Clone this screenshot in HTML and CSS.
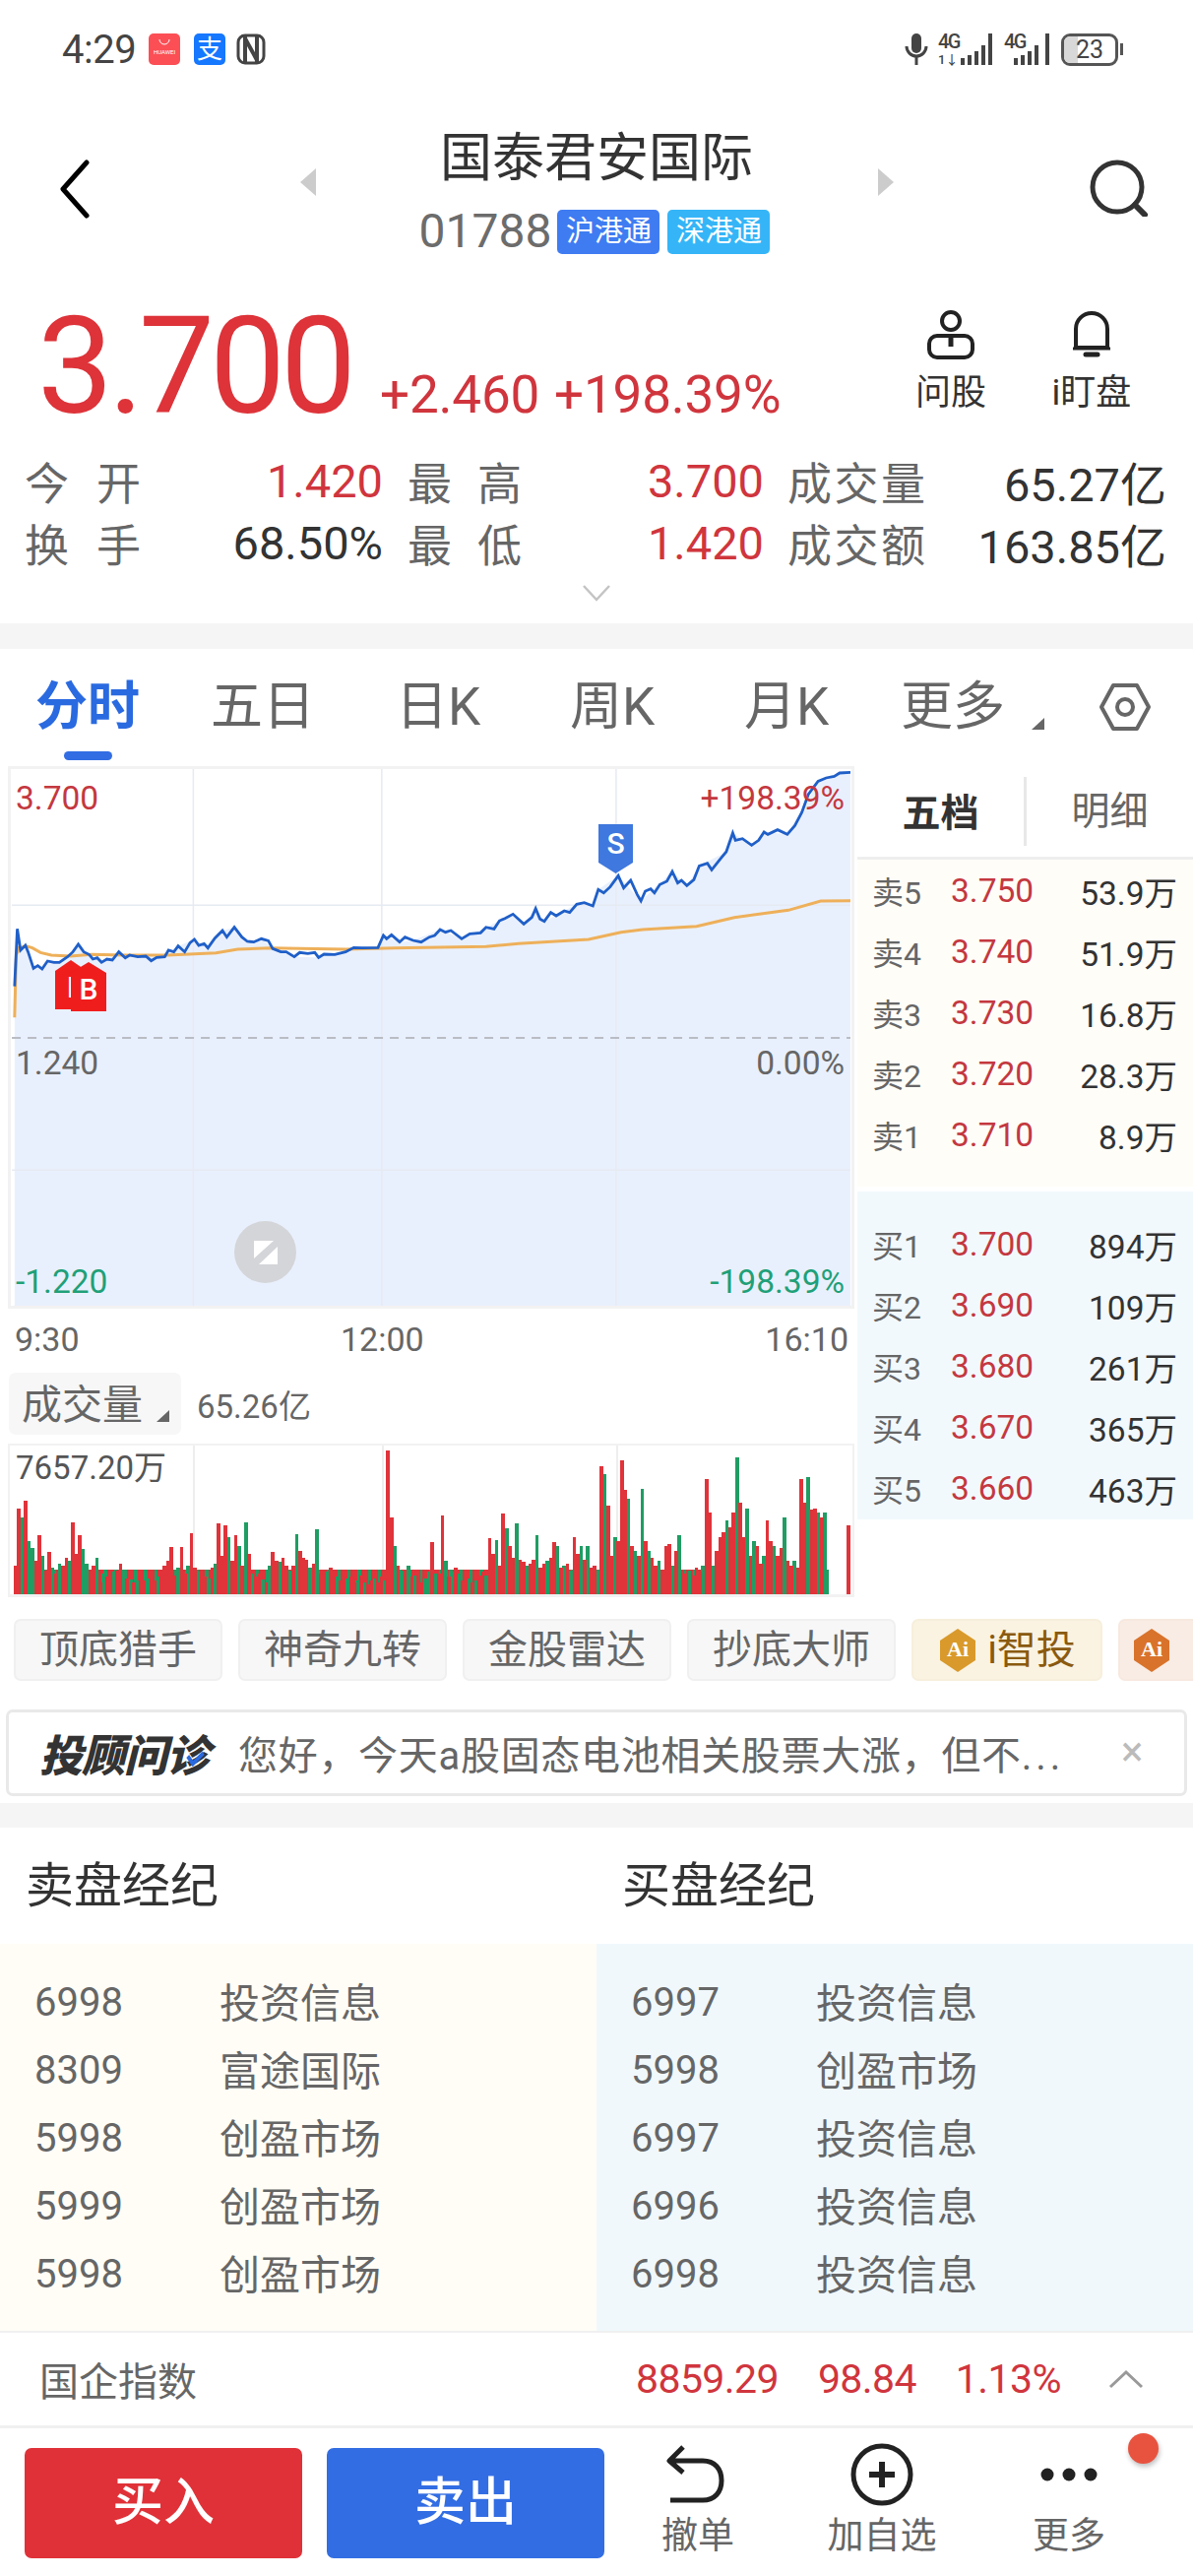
FILE: index.html
```html
<!DOCTYPE html>
<html>
    <head>
        <meta charset="utf-8">
        <title>国泰君安国际</title>
        <link rel="stylesheet" href="styles.css">
    </head>
    <body>
        <div class="page">
            <div class="status">
                <span class="clock">4:29</span>
                <span class="app-huawei">
                    <svg width="32" height="32" viewBox="0 0 32 32"><rect width="32" height="32" rx="5" fill="#fb4f55"/><path d="M11 6a5 5 0 0 0 10 0" fill="none" stroke="#fff" stroke-width="1"/><text x="16" y="21" class="huawei-text">HUAWEI</text></svg>
                </span>
                <span class="app-ali">支</span>
                <svg class="app-nfc" width="30" height="32" viewBox="0 0 30 32"><rect x="2" y="2" width="26" height="28" rx="7" fill="none" stroke="#444" stroke-width="3"/><path d="M9 3v26M21 3v26M9 5l12 22" fill="none" stroke="#444" stroke-width="4"/></svg>
                <span class="status-gap"></span>
                <svg width="24" height="32" viewBox="0 0 24 32"><rect x="7" y="0" width="10" height="20" rx="5" fill="#444"/><path d="M2 13a10 10 0 0 0 20 0M12 24v8" fill="none" stroke="#444" stroke-width="3"/></svg>
                <svg class="signal" width="57" height="33" viewBox="0 0 57 33"><text x="0" y="15" class="sig-text">4G</text><text x="0" y="31" class="sig-small">1↓</text><path d="M25 32v-7M32 32v-10M39 32v-14M46 32v-20M53 32v-32" stroke="#444" stroke-width="4" fill="none"/></svg>
                <svg class="signal" width="48" height="33" viewBox="0 0 48 33"><text x="0" y="15" class="sig-text">4G</text><path d="M12 32v-7M19 32v-10M26 32v-14M33 32v-20M44 32v-32" stroke="#444" stroke-width="4" fill="none"/></svg>
                <span class="battery"><span class="battery-fill"></span><span class="battery-num">23</span></span>
                <span class="battery-nub"></span>
            </div>

            <div class="head">
                <svg class="back" width="33" height="60" viewBox="0 0 33 60"><path d="M29 3L5 30l24 27" fill="none" stroke="#000" stroke-width="5" stroke-linecap="round" stroke-linejoin="round"/></svg>
                <span class="tri-left"></span>
                <div class="head-mid">
                    <div class="head-name">国泰君安国际</div>
                    <div class="head-code">
                        <span class="code-num">01788</span>
                        <span class="tag tag-hu">沪港通</span>
                        <span class="tag tag-sz">深港通</span>
                    </div>
                </div>
                <span class="tri-right"></span>
                <svg class="search" width="64" height="58" viewBox="0 0 64 58"><circle cx="30" cy="28" r="25" fill="none" stroke="#333" stroke-width="5"/><path d="M48 46l10 10" stroke="#333" stroke-width="6" stroke-linecap="round"/></svg>
            </div>

            <div class="quote">
                <div class="price-row">
                    <span class="price">3.700</span>
                    <span class="change">+2.460</span>
                    <span class="change">+198.39%</span>
                    <div class="quote-tools">
                        <div class="tool">
                            <svg width="52" height="50" viewBox="0 0 52 50"><circle cx="26" cy="11" r="9" fill="none" stroke="#222" stroke-width="4"/><rect x="4" y="26" width="44" height="22" rx="8" fill="none" stroke="#222" stroke-width="4"/><path d="M26 27v10" stroke="#222" stroke-width="5"/></svg>
                            <span>问股</span>
                        </div>
                        <div class="tool">
                            <svg width="44" height="50" viewBox="0 0 44 50"><path d="M6 38V19a16 16 0 0 1 32 0v19z" fill="none" stroke="#222" stroke-width="4" stroke-linejoin="round"/><path d="M3 39h38" stroke="#222" stroke-width="3"/><path d="M16 45h12" stroke="#222" stroke-width="5" stroke-linecap="round"/></svg>
                            <span>i盯盘</span>
                        </div>
                    </div>
                </div>
                <div class="stats">
                    <span class="stat-label">今 开</span><span class="stat-val red">1.420</span>
                    <span class="stat-label stat-two">最 高</span><span class="stat-val red">3.700</span>
                    <span class="stat-label stat-three">成交量</span><span class="stat-val">65.27亿</span>
                    <span class="stat-label">换 手</span><span class="stat-val">68.50%</span>
                    <span class="stat-label stat-two">最 低</span><span class="stat-val red">1.420</span>
                    <span class="stat-label stat-three">成交额</span><span class="stat-val">163.85亿</span>
                </div>
                <svg class="more-chevron" width="30" height="18" viewBox="0 0 30 18"><path d="M2 2l13 14L28 2" fill="none" stroke="#c4c4c4" stroke-width="2.5"/></svg>
            </div>

            <div class="band"></div>

            <div class="tabs">
                <span class="tab tab-on">分时</span>
                <span class="tab">五日</span>
                <span class="tab">日K</span>
                <span class="tab">周K</span>
                <span class="tab">月K</span>
                <span class="tab">更多<i class="corner corner-tab"></i></span>
                <svg class="tab-gear" width="54" height="50" viewBox="0 0 54 50"><path d="M15 3h24l12 22-12 22H15L3 25z" fill="none" stroke="#666" stroke-width="4" stroke-linejoin="round"/><circle cx="27" cy="25" r="8" fill="none" stroke="#666" stroke-width="4"/></svg>
                <span class="tab-bar"></span>
            </div>

            <div class="market">
                <div class="market-left">
                    <div class="price-chart">
                        <svg class="chart-lines" viewBox="0 0 1575 1677" preserveAspectRatio="none">
                            <polygon fill="#e9f0fd" points="27,695 32,520 38,585 47,570 52,590 62,640 70,632 78,642 88,618 110,622 125,605 145,567 165,598 188,622 220,590 240,600 270,603 305,605 330,572 360,552 385,578 412,525 434,515 458,558 484,550 505,580 545,605 590,607 640,590 655,577 700,577 710,540 740,560 765,555 815,522 855,550 900,515 950,475 970,505 992,458 1008,497 1068,445 1098,450 1108,400 1145,358 1187,435 1245,345 1272,388 1295,328 1345,285 1357,228 1392,265 1415,225 1458,232 1485,165 1515,70 1555,45 1575,43 1575,1677 27,1677"/>
                            <path class="grid" d="M22 448H1575M22 1255H1575M358 28V1677M707 28V1677M1141 28V1677"/>
                            <path class="grid-mid" d="M22 852H1575"/>
                            <polyline class="line-avg" points="27,790 30,600 35,577 50,573 60,578 75,592 95,600 130,603 170,598 230,600 310,600 400,593 440,582 500,578 640,582 730,578 900,574 960,565 1090,552 1150,530 1190,522 1290,512 1360,485 1460,463 1520,435 1575,434"/>
                            <polyline class="line-price" points="27,695 32,520 38,585 47,570 52,590 62,640 70,632 78,642 88,618 100,622 110,622 125,605 135,590 145,567 155,590 165,598 172,612 180,608 188,622 198,612 208,615 220,590 232,608 240,600 255,605 270,603 280,617 290,607 305,605 312,585 322,590 330,572 342,590 352,562 360,552 368,570 378,565 385,578 398,548 412,525 420,545 434,515 448,545 458,558 470,560 484,550 497,556 505,580 520,590 530,590 545,605 555,592 570,595 583,592 590,607 600,597 620,598 640,590 655,577 670,578 700,577 710,540 716,550 725,538 740,560 750,545 765,555 780,560 795,545 805,540 815,522 825,530 835,525 855,550 870,535 890,532 900,515 915,520 925,495 935,488 950,475 970,505 985,485 992,458 1000,490 1008,497 1020,470 1030,480 1045,465 1055,470 1068,445 1082,440 1098,450 1108,400 1118,410 1130,392 1145,358 1155,395 1168,372 1180,415 1187,435 1195,405 1205,398 1212,410 1222,385 1235,375 1245,345 1255,380 1262,372 1272,388 1285,370 1295,328 1310,320 1318,340 1335,305 1345,285 1357,228 1362,250 1375,245 1392,265 1405,250 1415,225 1422,232 1440,218 1458,232 1472,205 1485,165 1497,110 1515,70 1530,60 1545,55 1555,45 1575,43"/>
                        </svg>
                        <span class="axis axis-tl red-dim">3.700</span>
                        <span class="axis axis-tr red-dim">+198.39%</span>
                        <span class="axis axis-ml">1.240</span>
                        <span class="axis axis-mr">0.00%</span>
                        <span class="axis axis-bl green">-1.220</span>
                        <span class="axis axis-br green">-198.39%</span>
                        <span class="mark mark-i">I</span>
                        <span class="mark mark-b">B</span>
                        <span class="mark mark-s">S</span>
                        <span class="stamp">
                            <svg width="30" height="30" viewBox="0 0 30 30"><path d="M3 3h20L3 21zM27 9v18H8z" fill="#fff"/></svg>
                        </span>
                    </div>
                    <div class="times"><span class="time-start">9:30</span><span>12:00</span><span class="time-end">16:10</span></div>
                    <div class="vol-head">
                        <span class="vol-btn">成交量<i class="corner"></i></span>
                        <span class="vol-total">65.26亿</span>
                    </div>
                    <div class="vol-chart">
                        <i class="vol-grid vol-grid-1"></i>
                        <i class="vol-grid vol-grid-2"></i>
                        <i class="vol-grid vol-grid-3"></i>
                        <svg class="vol-bars" viewBox="-0.5 0 247 156" preserveAspectRatio="none">
                            <path class="vol-base" stroke="#1f9d63" d="M0 143H240"/>
                            <path class="vol-base vol-base-red" stroke="#e0333a" d="M0 143H240"/>
                            <path stroke="#1f9d63" d="M2 156v-80M4 156v-55M5 156v-48M8 156v-40M11 156v-28M13 156v-32M16 156v-35M20 156v-47M21 156v-32M24 156v-38M26 156v-22M29 156v-24M32 156v-26M34 156v-15M36 156v-14M39 156v-16M42 156v-18M48 156v-28M51 156v-30M54 156v-24M57 156v-16M59 156v-32M63 156v-60M66 156v-50M68 156v-75M70 156v-22M73 156v-15M75 156v-30M78 156v-34M81 156v-25M83 156v-63M87 156v-28M89 156v-68M92 156v-24M95 156v-18M98 156v-16M101 156v-14M103 156v-12M106 156v-16M109 156v-14M112 156v-50M114 156v-25M116 156v-30M118 156v-20M121 156v-16M122 156v-24M124 156v-22M127 156v-35M129 156v-24M131 156v-22M134 156v-16M136 156v-14M139 156v-20M142 156v-56M145 156v-69M148 156v-74M151 156v-30M154 156v-62M157 156v-35M160 156v-50M162 156v-30M164 156v-25M167 156v-50M169 156v-50M172 156v-26M174 156v-125M177 156v-60M181 156v-100M183 156v-45M185 156v-110M187 156v-45M190 156v-35M194 156v-30M196 156v-62M199 156v-25M203 156v-30M206 156v-30M210 156v-77M213 156v-143M216 156v-89M218 156v-55M221 156v-40M224 156v-50M227 156v-80M230 156v-35M234 156v-122M237 156v-85M239 156v-85"/>
                            <path stroke="#e0333a" d="M0 156v-30M1 156v-89M3 156v-97M6 156v-35M7 156v-62M9 156v-25M10 156v-44M12 156v-22M14 156v-30M15 156v-38M17 156v-75M18 156v-42M19 156v-62M22 156v-18M23 156v-30M25 156v-12M27 156v-18M28 156v-20M30 156v-25M31 156v-32M33 156v-16M35 156v-12M37 156v-18M38 156v-14M40 156v-20M41 156v-14M43 156v-12M44 156v-30M45 156v-35M46 156v-49M47 156v-20M49 156v-49M50 156v-22M52 156v-64M53 156v-28M55 156v-20M56 156v-18M58 156v-28M60 156v-74M61 156v-40M62 156v-72M64 156v-35M65 156v-62M67 156v-30M69 156v-42M71 156v-18M72 156v-22M74 156v-12M76 156v-44M77 156v-35M79 156v-38M80 156v-30M82 156v-30M84 156v-45M85 156v-38M86 156v-36M88 156v-32M90 156v-22M91 156v-15M93 156v-28M94 156v-20M96 156v-14M97 156v-22M99 156v-18M100 156v-12M102 156v-20M104 156v-10M105 156v-14M107 156v-12M108 156v-18M110 156v-150M111 156v-80M113 156v-30M115 156v-22M117 156v-18M119 156v-26M120 156v-12M123 156v-54M125 156v-22M126 156v-82M128 156v-18M130 156v-28M132 156v-14M133 156v-20M135 156v-12M137 156v-20M138 156v-24M140 156v-59M141 156v-42M143 156v-30M144 156v-84M146 156v-50M147 156v-38M149 156v-36M150 156v-34M152 156v-32M153 156v-36M155 156v-28M156 156v-32M158 156v-38M159 156v-54M161 156v-28M163 156v-32M165 156v-60M166 156v-42M168 156v-36M170 156v-28M171 156v-30M173 156v-133M175 156v-92M176 156v-40M178 156v-55M179 156v-140M180 156v-109M182 156v-50M184 156v-40M186 156v-55M188 156v-38M189 156v-30M191 156v-26M192 156v-50M193 156v-52M195 156v-45M197 156v-25M198 156v-22M200 156v-20M201 156v-28M202 156v-24M204 156v-120M205 156v-85M207 156v-45M208 156v-60M209 156v-65M211 156v-70M212 156v-85M214 156v-95M215 156v-60M217 156v-40M219 156v-50M220 156v-32M222 156v-77M223 156v-55M225 156v-40M226 156v-48M228 156v-35M229 156v-30M231 156v-28M232 156v-120M233 156v-95M235 156v-88M236 156v-89M238 156v-80M246 156v-72"/>
                        </svg>
                        <span class="vol-max">7657.20万</span>
                    </div>
                </div>

                <div class="book">
                    <div class="book-tabs">
                        <span class="book-tab book-tab-on">五档</span>
                        <span class="book-tab">明细</span>
                    </div>
                    <div class="book-side book-sell">
                        <div class="book-row"><span class="book-lab">卖5</span><span class="book-px">3.750</span><span class="book-vol">53.9万</span></div>
                        <div class="book-row"><span class="book-lab">卖4</span><span class="book-px">3.740</span><span class="book-vol">51.9万</span></div>
                        <div class="book-row"><span class="book-lab">卖3</span><span class="book-px">3.730</span><span class="book-vol">16.8万</span></div>
                        <div class="book-row"><span class="book-lab">卖2</span><span class="book-px">3.720</span><span class="book-vol">28.3万</span></div>
                        <div class="book-row"><span class="book-lab">卖1</span><span class="book-px">3.710</span><span class="book-vol">8.9万</span></div>
                    </div>
                    <div class="book-side book-buy">
                        <div class="book-row"><span class="book-lab">买1</span><span class="book-px">3.700</span><span class="book-vol">894万</span></div>
                        <div class="book-row"><span class="book-lab">买2</span><span class="book-px">3.690</span><span class="book-vol">109万</span></div>
                        <div class="book-row"><span class="book-lab">买3</span><span class="book-px">3.680</span><span class="book-vol">261万</span></div>
                        <div class="book-row"><span class="book-lab">买4</span><span class="book-px">3.670</span><span class="book-vol">365万</span></div>
                        <div class="book-row"><span class="book-lab">买5</span><span class="book-px">3.660</span><span class="book-vol">463万</span></div>
                    </div>
                </div>
            </div>

            <div class="chips">
                <span class="chip">顶底猎手</span>
                <span class="chip">神奇九转</span>
                <span class="chip">金股雷达</span>
                <span class="chip">抄底大师</span>
                <span class="chip chip-gold">
                    <svg width="40" height="44" viewBox="0 0 40 44"><polygon points="20,0 38,12 38,32 20,44 2,32 2,12" fill="#d99a2b"/><text x="20" y="28" class="ai-text">Ai</text></svg>
                    i智投
                </span>
                <span class="chip chip-copper">
                    <svg width="40" height="44" viewBox="0 0 40 44"><polygon points="20,0 38,12 38,32 20,44 2,32 2,12" fill="#d9732b"/><text x="20" y="28" class="ai-text">Ai</text></svg>
                </span>
            </div>

            <div class="advisor">
                <span class="advisor-logo">投顾问诊<i class="advisor-tick"></i></span>
                <span class="advisor-text">您好，今天a股固态电池相关股票大涨，但不<span class="advisor-dots">...</span></span>
                <span class="advisor-close">×</span>
            </div>

            <div class="band band-two"></div>

            <div class="brokers">
                <div class="broker-col">
                    <div class="broker-title">卖盘经纪</div>
                    <div class="broker-list broker-sell">
                        <div class="broker-row"><span>6998</span><span>投资信息</span></div>
                        <div class="broker-row"><span>8309</span><span>富途国际</span></div>
                        <div class="broker-row"><span>5998</span><span>创盈市场</span></div>
                        <div class="broker-row"><span>5999</span><span>创盈市场</span></div>
                        <div class="broker-row"><span>5998</span><span>创盈市场</span></div>
                    </div>
                </div>
                <div class="broker-col">
                    <div class="broker-title">买盘经纪</div>
                    <div class="broker-list broker-buy">
                        <div class="broker-row"><span>6997</span><span>投资信息</span></div>
                        <div class="broker-row"><span>5998</span><span>创盈市场</span></div>
                        <div class="broker-row"><span>6997</span><span>投资信息</span></div>
                        <div class="broker-row"><span>6996</span><span>投资信息</span></div>
                        <div class="broker-row"><span>6998</span><span>投资信息</span></div>
                    </div>
                </div>
            </div>

            <div class="index-bar">
                <span class="index-name">国企指数</span>
                <span class="index-num index-a">8859.29</span>
                <span class="index-num index-b">98.84</span>
                <span class="index-num index-c">1.13%</span>
                <svg class="index-up" width="36" height="20" viewBox="0 0 36 20"><path d="M2 18L18 3l16 15" fill="none" stroke="#999" stroke-width="3"/></svg>
            </div>

            <div class="foot">
                <span class="trade trade-buy">买入</span>
                <span class="trade trade-sell">卖出</span>
                <div class="foot-tool foot-undo">
                    <svg width="64" height="60" viewBox="0 0 64 60"><path d="M17 2L3 16l14 12M5 16h32c12 0 19 8 19 20s-7 20-19 20H4" fill="none" stroke="#222" stroke-width="5" stroke-linejoin="round"/></svg>
                    <span>撤单</span>
                </div>
                <div class="foot-tool foot-add">
                    <svg width="64" height="64" viewBox="0 0 64 64"><circle cx="32" cy="32" r="29" fill="none" stroke="#222" stroke-width="5"/><path d="M32 19v26M19 32h26" stroke="#222" stroke-width="6"/></svg>
                    <span>加自选</span>
                </div>
                <div class="foot-tool foot-more">
                    <svg width="64" height="60" viewBox="0 0 64 60"><circle cx="10" cy="30" r="6.5" fill="#222"/><circle cx="32" cy="30" r="6.5" fill="#222"/><circle cx="54" cy="30" r="6.5" fill="#222"/></svg>
                    <span>更多</span>
                </div>
                <span class="foot-dot"></span>
            </div>
        </div>
    </body>
</html>
```

FILE: styles.css
```css
body {
    margin: 0;
    background: #fff;
    font-family: Roboto, "Noto Sans CJK SC", sans-serif;
    color: #333;
}
i {
    font-style: normal;
}
.page {
    width: 1212px;
    height: 2616px;
    overflow: hidden;
}
.red {
    color: #d0353d;
}
.red-dim {
    color: #c4383f;
}
.green {
    color: #1fa078;
}

/* status bar */
.status {
    height: 100px;
    padding: 0 71px 0 63px;
    box-sizing: border-box;
    display: flex;
    align-items: center;
    color: #444;
}
.clock {
    font-size: 40px;
    letter-spacing: -.5px;
    width: 88px;
}
.app-huawei {
    width: 32px;
    height: 32px;
    margin-right: 14px;
}
.huawei-text {
    font-size: 6px;
    text-anchor: middle;
    fill: #fff;
}
.app-ali {
    width: 32px;
    height: 32px;
    border-radius: 5px;
    background: #1677ff;
    color: #fff;
    font-size: 26px;
    line-height: 32px;
    text-align: center;
    margin-right: 11px;
}
.status-gap {
    flex: 1;
}
.signal {
    margin-left: 10px;
    overflow: visible;
}
.sig-text {
    font-size: 20px;
    letter-spacing: -1.5px;
    font-weight: 500;
    fill: #444;
}
.sig-small {
    font-size: 13px;
    font-weight: 500;
    fill: #444;
}
.battery {
    margin-left: 10px;
    width: 58px;
    height: 33px;
    box-sizing: border-box;
    border: 3px solid #555;
    border-radius: 9px;
    position: relative;
    overflow: hidden;
    display: block;
}
.battery-fill {
    position: absolute;
    left: 0;
    top: 0;
    bottom: 0;
    width: 14px;
    background: #d8d8d8;
}
.battery-num {
    position: relative;
    display: block;
    text-align: center;
    font-size: 25px;
    line-height: 27px;
}
.battery-nub {
    width: 3px;
    height: 12px;
    margin-left: 2px;
    background: #555;
}

/* title */
.head {
    height: 196px;
    position: relative;
    display: flex;
    justify-content: center;
}
.head-mid {
    padding-top: 31px;
    text-align: center;
}
.head-name {
    font-size: 53px;
    line-height: 60px;
    color: #333;
}
.head-code {
    margin-top: 20px;
    display: flex;
    align-items: center;
    justify-content: center;
}
.code-num {
    font-size: 48px;
    line-height: 48px;
    color: #6c6c6c;
    margin-right: 6px;
    margin-left: 4px;
}
.tag {
    width: 104px;
    height: 45px;
    border-radius: 5px;
    color: #fff;
    font-size: 29px;
    line-height: 45px;
    text-align: center;
    margin-right: 8px;
}
.tag-hu {
    background: #3f7cf2;
}
.tag-sz {
    background: #35b5f7;
}
.back {
    position: absolute;
    left: 59px;
    top: 62px;
}
.search {
    position: absolute;
    left: 1105px;
    top: 62px;
}
.tri-left,
.tri-right {
    position: absolute;
    top: 71px;
    width: 0;
    height: 0;
    border-top: 14px solid transparent;
    border-bottom: 14px solid transparent;
}
.tri-left {
    left: 305px;
    border-right: 16px solid #ccc;
}
.tri-right {
    left: 892px;
    border-left: 16px solid #ccc;
}

/* quote */
.quote {
    height: 337px;
    position: relative;
}
.price-row {
    height: 155px;
    box-sizing: border-box;
    padding: 8px 53px 0 38px;
    display: flex;
    align-items: baseline;
}
.price {
    font-size: 137px;
    line-height: 137px;
    letter-spacing: -5px;
    color: #dd3339;
    margin-right: 29px;
}
.change {
    font-size: 53px;
    letter-spacing: -.2px;
    color: #d0353d;
    margin-right: 15px;
}
.quote-tools {
    margin-left: auto;
    align-self: flex-start;
    display: flex;
    gap: 43px;
    margin-top: 11px;
}
.tool {
    width: 100px;
    display: flex;
    flex-direction: column;
    align-items: center;
    font-size: 36px;
    line-height: 50px;
    color: #333;
}
.tool svg {
    margin-bottom: 9px;
}
.stats {
    padding-left: 25px;
    margin-top: 6px;
    display: grid;
    grid-template-columns: 118px 246px 141px 246px 164px 245px;
    grid-auto-rows: 63px;
    align-items: center;
    font-size: 47px;
}
.stat-label {
    color: #666;
    font-size: 45px;
    text-align-last: justify;
}
.stat-two {
    padding-left: 25px;
}
.stat-three {
    padding-left: 24px;
}
.stat-val {
    text-align: right;
}
.more-chevron {
    position: absolute;
    left: 591px;
    top: 297px;
}
.band {
    height: 26px;
    background: #f5f5f5;
}

/* tabs */
.tabs {
    height: 116px;
    box-sizing: border-box;
    padding: 26px 0 0 36px;
    position: relative;
    display: grid;
    grid-template-columns: 178px 188px 177px 177px 159px 201px 54px;
    align-items: start;
    font-size: 53px;
    line-height: 66px;
    color: #666;
}
.tab-gear {
    margin-top: 8px;
}
.tab {
    position: relative;
}
.tab-on {
    color: #2a6ae0;
    font-weight: 700;
}
.tab-bar {
    position: absolute;
    left: 65px;
    top: 104px;
    width: 49px;
    height: 9px;
    border-radius: 5px;
    background: #326de3;
}
.corner {
    position: absolute;
    width: 0;
    height: 0;
    border-left: 13px solid transparent;
    border-bottom: 12px solid #666;
}
.corner-tab {
    left: 133px;
    top: 44px;
}

/* charts */
.market {
    height: 856px;
    padding-top: 3px;
    box-sizing: border-box;
    display: flex;
}
.market-left {
    width: 860px;
    margin-left: 8px;
}
.price-chart {
    height: 551px;
    box-sizing: border-box;
    border: 3px solid #f2f2f2;
    position: relative;
    overflow: hidden;
}
.chart-lines {
    position: absolute;
    left: -11px;
    top: -11px;
    width: 864px;
    height: 559px;
}
.grid {
    fill: none;
    stroke: #e6eaf2;
    stroke-width: 1.5;
    vector-effect: non-scaling-stroke;
}
.grid-mid {
    fill: none;
    stroke: #b9bcc4;
    stroke-width: 2;
    stroke-dasharray: 9 7;
    vector-effect: non-scaling-stroke;
}
.line-price {
    fill: none;
    stroke: #1f5fc8;
    stroke-width: 2.8;
    vector-effect: non-scaling-stroke;
}
.line-avg {
    fill: none;
    stroke: #eeb05a;
    stroke-width: 3;
    vector-effect: non-scaling-stroke;
}
.axis {
    position: absolute;
    font-size: 33.5px;
    line-height: 40px;
}
.axis-ml,
.axis-mr {
    color: #666;
}
.axis-tl {
    left: 5px;
    top: 10px;
}
.axis-tr {
    right: 7px;
    top: 10px;
}
.axis-ml {
    left: 5px;
    top: 279px;
}
.axis-mr {
    right: 7px;
    top: 279px;
}
.axis-bl {
    left: 5px;
    top: 501px;
}
.axis-br {
    right: 7px;
    top: 501px;
}
.mark {
    position: absolute;
    height: 50px;
    color: #fff;
    font-size: 30px;
    font-weight: 500;
    line-height: 56px;
    text-align: center;
}
.mark-i {
    left: 45px;
    top: 194px;
    width: 32px;
    background: #f01d1d;
    clip-path: polygon(50% 0, 100% 22%, 100% 100%, 0 100%, 0 22%);
}
.mark-b {
    left: 61px;
    top: 196px;
    width: 36px;
    background: #f01d1d;
    clip-path: polygon(50% 0, 100% 22%, 100% 100%, 0 100%, 0 22%);
}
.mark-s {
    left: 597px;
    top: 56px;
    width: 35px;
    background: #3f78de;
    line-height: 40px;
    clip-path: polygon(0 0, 100% 0, 100% 78%, 50% 100%, 0 78%);
}
.stamp {
    position: absolute;
    left: 227px;
    top: 459px;
    width: 63px;
    height: 63px;
    border-radius: 50%;
    background: #d4d5d9;
    display: flex;
    align-items: center;
    justify-content: center;
}
.times {
    height: 61px;
    margin-bottom: 4px;
    padding: 0 6px 0 7px;
    display: flex;
    align-items: center;
    font-size: 34px;
    color: #666;
    box-sizing: border-box;
}
.time-start {
    width: 331px;
}
.time-end {
    margin-left: auto;
}
.vol-head {
    display: flex;
    align-items: center;
    height: 63px;
}
.vol-btn {
    width: 175px;
    height: 63px;
    margin-left: 1px;
    box-sizing: border-box;
    padding-left: 13px;
    border-radius: 7px;
    background: #f7f7f7;
    font-size: 41px;
    line-height: 66px;
    color: #666;
    position: relative;
}
.vol-btn .corner {
    left: 150px;
    top: 38px;
}
.vol-total {
    margin-left: 16px;
    font-size: 33px;
    color: #666;
}
.vol-chart {
    margin-top: 9px;
    height: 156px;
    border: 2px solid #f2f2f2;
    border-bottom-width: 3px;
    box-sizing: border-box;
    position: relative;
}
.vol-grid {
    position: absolute;
    top: 0;
    bottom: 0;
    width: 2px;
    background: #eee;
}
.vol-grid-1 {
    left: 186px;
}
.vol-grid-2 {
    left: 378px;
}
.vol-grid-3 {
    left: 616px;
}
.vol-bars {
    position: absolute;
    left: 4px;
    bottom: 0;
    width: 850px;
    height: 152px;
    fill: none;
    stroke-width: 1.05;
    shape-rendering: crispEdges;
}
.vol-bars .vol-base {
    stroke-width: 26;
}
.vol-bars .vol-base-red {
    stroke-dasharray: 2 1;
}
.vol-max {
    position: absolute;
    left: 6px;
    top: 3px;
    font-size: 33px;
    line-height: 40px;
    color: #555;
}

/* order book */
.book {
    width: 341px;
    margin-left: 3px;
}
.book-tabs {
    height: 95px;
    box-sizing: border-box;
    border-bottom: 3px solid #eee;
    display: flex;
    align-items: center;
    font-size: 39px;
    line-height: 76px;
    color: #666;
}
.book-tab {
    width: 169px;
    text-align: center;
}
.book-tab-on {
    font-weight: 700;
    color: #333;
    border-right: 3px solid #e8e8e8;
    height: 70px;
    line-height: 74px;
}
.book-side {
    box-sizing: border-box;
    padding: 0 16px 0 15px;
}
.book-sell {
    height: 332px;
    background: #fffdf8;
}
.book-buy {
    margin-top: 5px;
    height: 333px;
    background: #f2f9fd;
    padding-top: 22px;
}
.book-row {
    height: 62px;
    display: flex;
    align-items: center;
    font-size: 33.5px;
}
.book-lab {
    width: 80px;
    font-size: 32px;
    color: #666;
}
.book-px {
    color: #c4383f;
}
.book-vol {
    margin-left: auto;
    color: #333;
}

/* chips */
.chips {
    padding: 13px 0 0 14px;
    height: 105px;
    box-sizing: border-box;
    display: flex;
    gap: 16px;
}
.chip {
    width: 212px;
    height: 63px;
    flex-shrink: 0;
    box-sizing: border-box;
    border: 2px solid #f0f0f0;
    border-radius: 7px;
    background: #f7f7f7;
    font-size: 40px;
    line-height: 58px;
    color: #666;
    text-align: center;
    display: flex;
    justify-content: center;
    align-items: center;
    gap: 10px;
}
.chip-gold {
    width: 194px;
    background: #faf3e2;
    color: #8a5a10;
    border-color: #f7efdc;
}
.chip-copper {
    width: 194px;
    justify-content: flex-start;
    padding-left: 12px;
    background: #f9ece4;
    border-color: #f7e9e0;
}
.ai-text {
    font-family: "Liberation Serif", serif;
    font-size: 22px;
    font-weight: 700;
    text-anchor: middle;
    fill: #fff;
}

/* advisor */
.advisor {
    margin: 0 6px;
    height: 88px;
    box-sizing: border-box;
    border: 3px solid #e9e9e9;
    border-radius: 7px;
    display: flex;
    align-items: center;
    padding-left: 31px;
    position: relative;
}
.advisor-logo {
    font-size: 44px;
    font-weight: 900;
    font-style: italic;
    color: #333;
    width: 172px;
    letter-spacing: -1px;
    position: relative;
    white-space: nowrap;
}
.advisor-tick {
    position: absolute;
    left: 150px;
    top: 30px;
    width: 13px;
    height: 7px;
    border-left: 4px solid #2a6ae0;
    border-bottom: 4px solid #2a6ae0;
    transform: rotate(-45deg) skewX(-10deg);
}
.advisor-text {
    margin-left: 30px;
    font-size: 40px;
    letter-spacing: .7px;
    color: #666;
    white-space: nowrap;
}
.advisor-dots {
    letter-spacing: 4px;
}
.advisor-close {
    position: absolute;
    left: 1130px;
    top: 12px;
    font-size: 42px;
    line-height: 56px;
    color: #bbb;
}
.band-two {
    margin-top: 7px;
    height: 25px;
    background: #f5f5f5;
}

/* brokers */
.brokers {
    display: flex;
    height: 513px;
    border-bottom: 3px solid #f0f0f0;
    box-sizing: border-box;
}
.broker-col {
    width: 606px;
}
.broker-col + .broker-col {
    flex: 1;
}
.broker-title {
    height: 118px;
    padding-left: 26px;
    font-size: 49px;
    line-height: 120px;
    color: #333;
}
.broker-list {
    height: 393px;
    box-sizing: border-box;
    padding: 25px 0 0 35px;
}
.broker-sell {
    background: #fffdf6;
}
.broker-buy {
    background: #f0f8fc;
}
.broker-row {
    height: 69px;
    display: flex;
    align-items: center;
    font-size: 40px;
    color: #666;
}
.broker-row span:first-child {
    width: 188px;
}
.broker-row span:last-child {
    font-size: 41px;
    margin-top: -5px;
}

/* index bar */
.index-bar {
    height: 97px;
    box-sizing: border-box;
    border-bottom: 3px solid #f0f0f0;
    display: flex;
    align-items: center;
    padding-left: 40px;
    font-size: 40px;
}
.index-name {
    color: #666;
}
.index-num {
    color: #d0353d;
    font-size: 41px;
    letter-spacing: -.6px;
}
.index-a {
    margin-left: 446px;
}
.index-b {
    margin-left: 40px;
}
.index-c {
    margin-left: 40px;
}
.index-up {
    margin-left: 48px;
}

/* footer */
.foot {
    height: 151px;
    position: relative;
    display: flex;
    padding: 20px 0 0 25px;
    box-sizing: border-box;
}
.trade {
    width: 282px;
    height: 112px;
    border-radius: 7px;
    color: #fff;
    font-size: 52px;
    font-weight: 500;
    line-height: 112px;
    text-align: center;
    margin-right: 25px;
}
.trade-buy {
    background: #e03138;
}
.trade-sell {
    background: #326de3;
}
.foot-tool {
    position: absolute;
    top: 15px;
    width: 130px;
    display: flex;
    flex-direction: column;
    align-items: center;
    font-size: 37px;
    line-height: 50px;
    color: #666;
}
.foot-tool svg {
    height: 64px;
    margin-bottom: 6px;
}
.foot-undo {
    left: 644px;
}
.foot-add {
    left: 831px;
}
.foot-more {
    left: 1021px;
}
.foot-dot {
    position: absolute;
    left: 1146px;
    top: 5px;
    width: 31px;
    height: 31px;
    border-radius: 50%;
    background: #e8533f;
    box-shadow: 1px 3px 5px rgba(0, 0, 0, .25);
}
```
